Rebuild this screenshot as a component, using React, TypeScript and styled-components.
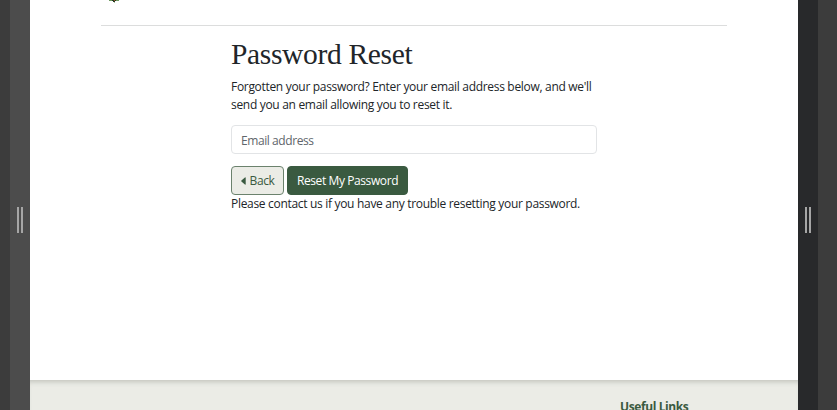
import React from "react";
import styled, { createGlobalStyle } from "styled-components";

const GlobalStyle = createGlobalStyle`
  * { box-sizing: border-box; }
  body {
    margin: 0;
    overflow: hidden;
    background: #3c3c3c;
    color: #212529;
    font: 12px/18px "Open Sans", "Noto Sans", sans-serif;
  }
`;

const Frame = styled.div`
  display: flex;
  width: 837px;
  height: 410px;
  overflow: hidden;
`;

const Gutter = styled.div<{ $width: number }>`
  flex: 0 0 ${(p) => p.$width}px;
  background: #3c3c3c;
`;

const Handle = styled.div<{ $color: string }>`
  flex: 0 0 20px;
  display: flex;
  justify-content: center;
  gap: 2px;
  padding-top: 207px;
  background: ${(p) => p.$color};
`;

const Grip = styled.span`
  width: 2px;
  height: 26px;
  background: #a6a6a6;
`;

const Page = styled.div`
  flex: 0 0 768px;
  display: flex;
  flex-direction: column;
  background: #fff;
`;

const Header = styled.header`
  height: 26px;
  margin: 0 71px;
  padding-left: 6px;
  border-bottom: 1px solid #dcdddd;
`;

const CrestTip = styled.svg`
  display: block;
`;

const Main = styled.main`
  flex: 0 0 354px;
  width: 366px;
  margin-left: 201px;
  padding-top: 11px;
`;

const Title = styled.h1`
  margin: 0 0 7px;
  font: 400 29.5px/34px "Liberation Serif", serif;
  letter-spacing: -0.34px;
  white-space: nowrap;
`;

const Copy = styled.p<{ $spacing: number }>`
  margin: 0;
  letter-spacing: ${(p) => p.$spacing}px;
  white-space: nowrap;
`;

const EmailInput = styled.input`
  display: block;
  width: 366px;
  height: 29px;
  margin: 11px 0 12px;
  padding: 1px 9px 0;
  border: 1px solid #e2e4e6;
  border-radius: 4px;
  font: inherit;
  letter-spacing: -0.42px;
  outline: none;
  &::placeholder { color: #60666b; opacity: 1; }
`;

const Actions = styled.div`
  display: flex;
  gap: 3px;
  height: 29px;
`;

const Button = styled.button<{ $primary?: boolean }>`
  display: flex;
  align-items: center;
  justify-content: center;
  gap: 4px;
  width: ${(p) => (p.$primary ? 121 : 53)}px;
  height: 29px;
  padding: 1px 0 0;
  border: 1px solid ${(p) => (p.$primary ? "#3a5a40" : "#6b826d")};
  border-radius: 4px;
  background: ${(p) => (p.$primary ? "#3a5a40" : "#ebece6")};
  color: ${(p) => (p.$primary ? "#fff" : "#3a5a40")};
  font: inherit;
  letter-spacing: -0.4px;
  white-space: nowrap;
`;

const Footer = styled.footer`
  flex: 0 0 30px;
  padding: 18px 0 0 590px;
  overflow: hidden;
  background: #ebece6;
  box-shadow: inset 0 5px 5px -3px #c2c4bd;
`;

const FooterTitle = styled.h2`
  margin: 0;
  color: #3a5a40;
  font: 700 12px/18px "Open Sans", "Noto Sans", sans-serif;
  letter-spacing: -0.4px;
  white-space: nowrap;
`;

export default function App() {
  return (
    <>
      <GlobalStyle />
      <Frame>
        <Gutter $width={10} />
        <Handle $color="#4c4c4c"><Grip /><Grip /></Handle>
        <Page>
          <Header>
            <CrestTip width="14" height="4" viewBox="0 0 14 4">
              <path d="M2 0h3v1H2zM9 0h3v1H9z" fill="#6d9960" />
              <path d="M5 0h4v1H8v1H6V1H5z" fill="#283c24" />
              <path d="M7 0h1v1H7z" fill="#a64b2c" />
              <path d="M7 2h1v1H7z" fill="#a9c3a2" />
            </CrestTip>
          </Header>
          <Main>
            <Title>Password Reset</Title>
            <Copy $spacing={-0.31}>
              Forgotten your password? Enter your email address below, and we'll
              <br />
              send you an email allowing you to reset it.
            </Copy>
            <EmailInput type="email" placeholder="Email address" />
            <Actions>
              <Button type="button">
                <svg width="5" height="8" viewBox="0 0 5 8" aria-hidden="true">
                  <path d="M4.7.8v6.4Q4.5 8 3.9 7.4L.4 4.4Q0 4 .4 3.6L3.9.6Q4.5 0 4.7.8Z" fill="#3a5a40" />
                </svg>
                Back
              </Button>
              <Button type="submit" $primary>Reset My Password</Button>
            </Actions>
            <Copy $spacing={-0.31}>Please contact us if you have any trouble resetting your password.</Copy>
          </Main>
          <Footer>
            <FooterTitle>Useful Links</FooterTitle>
          </Footer>
        </Page>
        <Handle $color="#28292b"><Grip /><Grip /></Handle>
        <Gutter $width={19} />
      </Frame>
    </>
  );
}
